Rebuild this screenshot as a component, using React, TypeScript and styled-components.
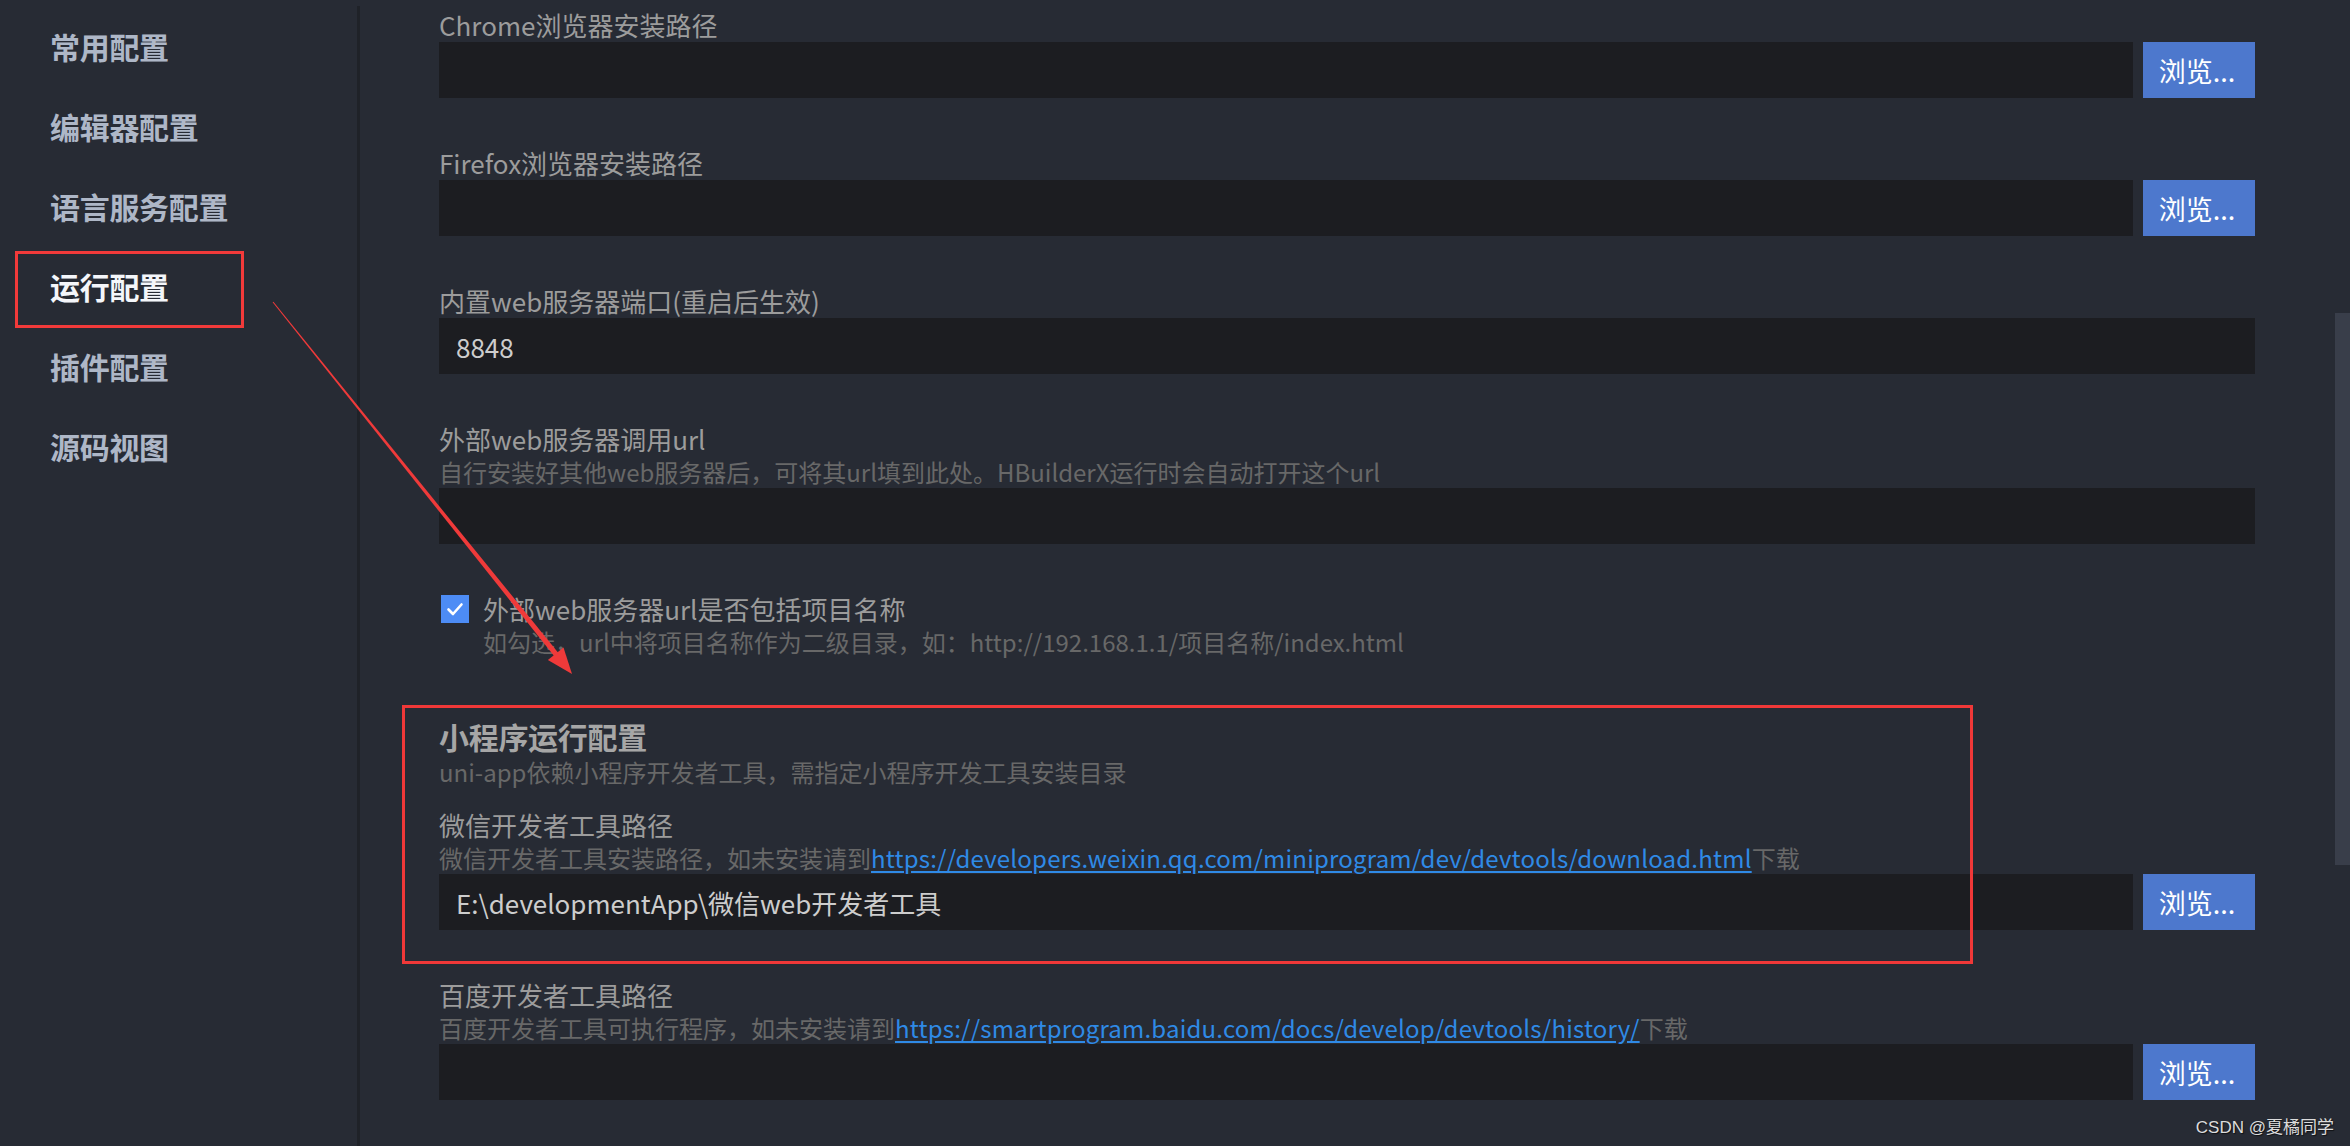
import React from "react";
import styled, { createGlobalStyle, css } from "styled-components";

const Global = createGlobalStyle`
  html, body { margin: 0; padding: 0; background: #272b34; }
  body { font-family: "Noto Sans CJK SC", "Noto Sans", sans-serif; }
  * { box-sizing: border-box; }
`;

const Page = styled.div`
  position: relative;
  display: flex;
  width: 2350px;
  height: 1146px;
  overflow: hidden;
  background: #272b34;
  font-family: "Noto Sans CJK SC", "Noto Sans", sans-serif;
`;

const Sidebar = styled.nav`
  width: 357px;
  flex: none;
  display: flex;
  flex-direction: column;
  padding-top: 6px;
`;

const NavItem = styled.div<{ $active?: boolean }>`
  position: relative;
  height: 80px;
  display: flex;
  align-items: center;
  padding-left: 50px;
  font-size: 30px;
  font-weight: 700;
  letter-spacing: -0.3px;
  color: ${(p) => (p.$active ? "#f4f6fa" : "#aeb7c7")};
  ${(p) =>
    p.$active &&
    css`
      &::after {
        content: "";
        position: absolute;
        left: 15px;
        top: 5px;
        width: 223px;
        height: 71px;
        border: 3px solid #f23a3a;
      }
    `}
`;

const Divider = styled.div`
  width: 3px;
  flex: none;
  margin-top: 6px;
  background: #1f2228;
`;

const Main = styled.main`
  flex: 1;
  display: flex;
  flex-direction: column;
  gap: 48px;
  padding: 8px 80px 0 79px;
`;

const Field = styled.div`
  display: flex;
  flex-direction: column;
`;

const Label = styled.div`
  font-size: 26px;
  line-height: 34px;
  height: 34px;
  color: #9c9c9c;
  white-space: nowrap;
`;

const Desc = styled.div`
  font-size: 24px;
  line-height: 32px;
  height: 32px;
  color: #686868;
  white-space: nowrap;
`;

const Link = styled.a`
  color: #2f8ae6;
  text-decoration: underline;
  text-underline-offset: 3px;
  letter-spacing: 0.2px;
`;

const Row = styled.div`
  display: flex;
  gap: 10px;
  height: 56px;
`;

const Input = styled.div`
  flex: 1;
  height: 56px;
  background: #1c1d21;
  display: flex;
  align-items: center;
  padding-left: 17px;
  font-size: 26px;
  color: #cdcdcd;
  white-space: nowrap;
`;

const Button = styled.div`
  width: 112px;
  flex: none;
  height: 56px;
  background: #4d78cd;
  color: #ffffff;
  font-size: 27px;
  display: flex;
  align-items: center;
  justify-content: center;
  padding-right: 4px;
`;

const CheckRow = styled.div`
  display: flex;
  align-items: center;
  gap: 14px;
  margin-left: 2px;
`;

const Box = styled.div`
  width: 28px;
  height: 28px;
  flex: none;
  background: #4d8cf5;
  display: flex;
  align-items: center;
  justify-content: center;
`;

const CheckDesc = styled(Desc)`
  padding-left: 44px;
`;

const Section = styled.section`
  position: relative;
  display: flex;
  flex-direction: column;
  margin-top: 10px;
  &::before {
    content: "";
    position: absolute;
    left: -37px;
    top: -11px;
    width: 1565px;
    height: 253px;
    border: 3px solid #f03838;
    pointer-events: none;
  }
`;

const SectionTitle = styled.div`
  font-size: 30px;
  font-weight: 700;
  line-height: 40px;
  color: #a6a6a6;
  letter-spacing: -0.3px;
`;

const SubField = styled(Field)`
  margin-top: 20px;
`;

const ScrollTrack = styled.div`
  width: 15px;
  flex: none;
  display: flex;
  flex-direction: column;
`;

const ScrollThumb = styled.div`
  margin-top: 313px;
  height: 552px;
  background: #393e4a;
`;

const Overlay = styled.svg`
  position: absolute;
  left: 0;
  top: 0;
  width: 2350px;
  height: 1146px;
  pointer-events: none;
`;

const Watermark = styled.div`
  position: absolute;
  right: 16px;
  bottom: 8px;
  font-family: "Liberation Sans", "Noto Sans CJK SC", sans-serif;
  font-size: 17px;
  color: #dcdcdc;
  text-shadow: 1px 1px 1px rgba(0, 0, 0, 0.6);
`;

const Browse = () => <Button>浏览...</Button>;

const navItems = ["常用配置", "编辑器配置", "语言服务配置", "运行配置", "插件配置", "源码视图"];

function Arrow() {
  const sx = 273, sy = 302, tx = 572, ty = 674;
  const dx = tx - sx, dy = ty - sy;
  const len = Math.hypot(dx, dy);
  const ux = dx / len, uy = dy / len;
  const nx = uy, ny = -ux;
  const headLen = 26, headW = 10;
  const bx = tx - ux * headLen, by = ty - uy * headLen;
  const p = (x: number, y: number) => `${x.toFixed(1)},${y.toFixed(1)}`;
  const shaft = [
    p(sx + nx * 0.5, sy + ny * 0.5),
    p(bx + ux * 2 + nx * 2.6, by + uy * 2 + ny * 2.6),
    p(bx + ux * 2 - nx * 2.6, by + uy * 2 - ny * 2.6),
    p(sx - nx * 0.5, sy - ny * 0.5),
  ].join(" ");
  const head = [p(tx, ty), p(bx + nx * headW, by + ny * headW), p(bx - nx * headW, by - ny * headW)].join(" ");
  return (
    <Overlay viewBox="0 0 2350 1146">
      <polygon points={shaft} fill="#ef3a3a" />
      <polygon points={head} fill="#ef3a3a" />
    </Overlay>
  );
}

export default function App() {
  return (
    <>
      <Global />
      <Page>
        <Sidebar>
          {navItems.map((n) => (
            <NavItem key={n} $active={n === "运行配置"}>
              {n}
            </NavItem>
          ))}
        </Sidebar>
        <Divider />
        <Main>
          <Field>
            <Label>Chrome浏览器安装路径</Label>
            <Row>
              <Input />
              <Browse />
            </Row>
          </Field>
          <Field>
            <Label>Firefox浏览器安装路径</Label>
            <Row>
              <Input />
              <Browse />
            </Row>
          </Field>
          <Field>
            <Label>内置web服务器端口(重启后生效)</Label>
            <Row>
              <Input>8848</Input>
            </Row>
          </Field>
          <Field>
            <Label>外部web服务器调用url</Label>
            <Desc>自行安装好其他web服务器后，可将其url填到此处。HBuilderX运行时会自动打开这个url</Desc>
            <Row>
              <Input />
            </Row>
          </Field>
          <Field>
            <CheckRow>
              <Box>
                <svg width="20" height="20" viewBox="0 0 20 20">
                  <path d="M3.5 10.5 L8 15 L16.5 5.5" fill="none" stroke="#ffffff" strokeWidth="2.6" strokeLinecap="round" strokeLinejoin="round" />
                </svg>
              </Box>
              <Label>外部web服务器url是否包括项目名称</Label>
            </CheckRow>
            <CheckDesc>如勾选，url中将项目名称作为二级目录，如：http://192.168.1.1/项目名称/index.html</CheckDesc>
          </Field>
          <Section>
            <SectionTitle>小程序运行配置</SectionTitle>
            <Desc>uni-app依赖小程序开发者工具，需指定小程序开发工具安装目录</Desc>
            <SubField>
              <Label>微信开发者工具路径</Label>
              <Desc>
                微信开发者工具安装路径，如未安装请到
                <Link>https://developers.weixin.qq.com/miniprogram/dev/devtools/download.html</Link>
                下载
              </Desc>
              <Row>
                <Input>E:\developmentApp\微信web开发者工具</Input>
                <Browse />
              </Row>
            </SubField>
          </Section>
          <Field>
            <Label>百度开发者工具路径</Label>
            <Desc>
              百度开发者工具可执行程序，如未安装请到
              <Link>https://smartprogram.baidu.com/docs/develop/devtools/history/</Link>
              下载
            </Desc>
            <Row>
              <Input />
              <Browse />
            </Row>
          </Field>
        </Main>
        <ScrollTrack>
          <ScrollThumb />
        </ScrollTrack>
        <Arrow />
        <Watermark>CSDN @夏橘同学</Watermark>
      </Page>
    </>
  );
}
